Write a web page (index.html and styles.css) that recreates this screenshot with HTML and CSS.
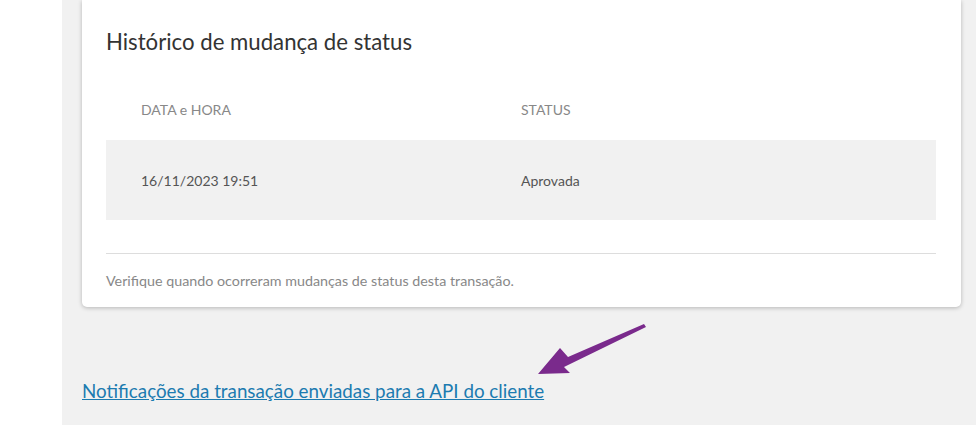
FILE: index.html
```html
<!DOCTYPE html>
<html>
<head>
  <meta charset="UTF-8" />
  <title>Histórico de mudança de status</title>
  <link rel="stylesheet" href="styles.css">
</head>
<body>
  <div class="page-area">
    <div class="status-card">
      <h2 class="card-title">Histórico de mudança de status</h2>
      <div class="status-table">
        <div class="status-row status-head">
          <div class="cell cell-date">DATA e HORA</div>
          <div class="cell">STATUS</div>
        </div>
        <div class="status-row status-item">
          <div class="cell cell-date">16/11/2023 19:51</div>
          <div class="cell">Aprovada</div>
        </div>
      </div>
      <p class="card-footer">Verifique quando ocorreram mudanças de status desta transação.</p>
    </div>

    <a href="#" class="api-link">Notificações da transação enviadas para a API do cliente</a>

    <!-- annotation arrow -->
    <svg class="note-arrow" width="120" height="60" viewBox="0 0 120 60">
      <path d="M0 51 L22 25 L30 34 L106 1 L108 4 L26 44 L32 50 Z" fill="#7a2a8c"/>
    </svg>
  </div>
</body>
</html>
```

FILE: styles.css
```css
body {
  margin: 0;
  background-color: #fff;
  font-family: Lato, "Liberation Sans", sans-serif;
}

.page-area {
  position: relative;
  margin-left: 62px;
  min-height: 425px;
  background-color: #f1f1f1;
  padding: 0 15px 0 20px;
  box-sizing: border-box;
}

.status-card {
  background-color: #fff;
  border-radius: 0 0 5px 5px;
  box-shadow: 0 1px 4px rgba(0, 0, 0, 0.25);
  padding: 27px 25px 16px 24px;
}

.card-title {
  margin: 0;
  font-size: 22.2px;
  line-height: 30px;
  font-weight: normal;
  color: #333;
}

.status-table {
  margin-top: 21px;
  border-bottom: 1px solid #ddd;
  padding-bottom: 33px;
}

.status-row {
  display: flex;
  align-items: center;
  font-size: 14px;
}

.status-head {
  height: 62px;
  color: #888;
}

.status-item {
  height: 80px;
  background-color: #f1f1f1;
  color: #555;
}

.cell {
  padding-left: 35px;
}

.cell-date {
  width: 345px;
}

.card-footer {
  margin: 17px 0 0;
  font-size: 14.3px;
  line-height: 20px;
  color: #888;
}

.api-link {
  display: inline-block;
  margin-top: 72px;
  font-size: 18.8px;
  line-height: 24px;
  color: #1c7bb0;
}

.note-arrow {
  position: absolute;
  left: 476px;
  top: 323px;
}
```
